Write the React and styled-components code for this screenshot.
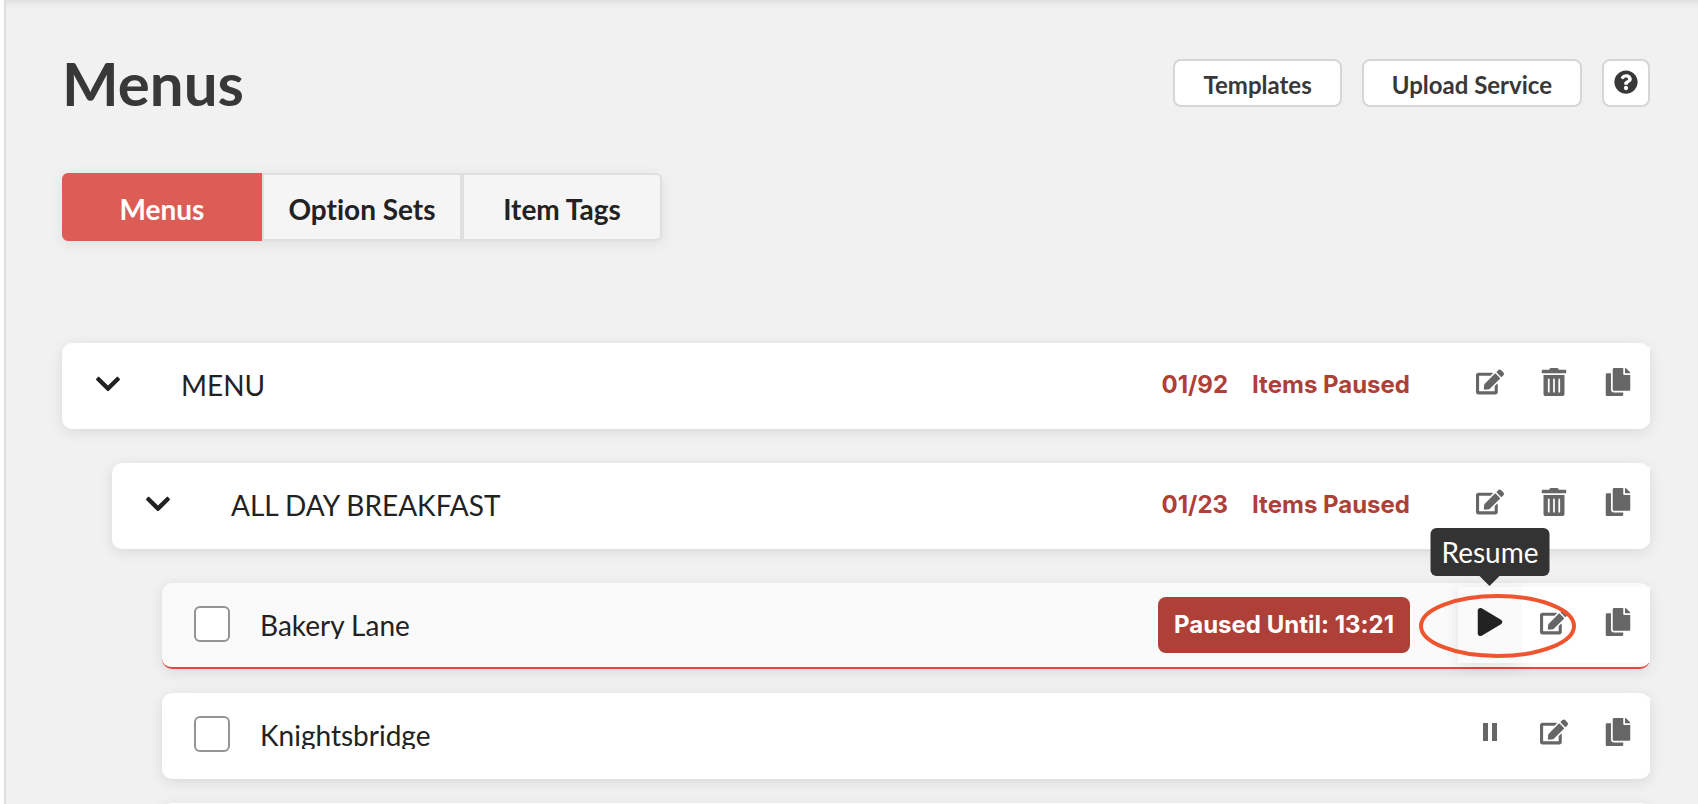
import React from "react";
import styled, { createGlobalStyle } from "styled-components";
import {
  FaChevronDown,
  FaCopy,
  FaEdit,
  FaPlay,
  FaQuestionCircle,
  FaTrashAlt,
} from "react-icons/fa";

const GlobalStyle = createGlobalStyle`
  *, *::before, *::after { box-sizing: border-box; }
  body {
    margin: 0;
    background: #fff;
    color: #222;
    font-family: Lato, "Liberation Sans", sans-serif;
    font-size: 28px;
    font-variant-ligatures: none;
  }
  button, input { font: inherit; font-variant-ligatures: none; color: inherit; margin: 0; }
  ul { list-style: none; margin: 0; padding: 0; }
`;

const Page = styled.div`
  height: 100vh;
  padding-left: 4px;
  overflow: hidden;
`;

const Main = styled.main`
  height: 100%;
  padding: 47px 48px 0 56px;
  border-left: 2px solid #dedede;
  background: linear-gradient(#dfdfdf, #ebebeb 4px, #f1f1f1 10px);
`;

const Header = styled.header`
  display: flex;
  align-items: center;
  justify-content: space-between;
`;

const Title = styled.h1`
  margin: 0;
  color: #383838;
  font-size: 60px;
  line-height: 72px;
`;

const HeaderActions = styled.div`
  display: flex;
  gap: 20px;
`;

const HeaderButton = styled.button`
  height: 48px;
  padding: 2px 28px 0;
  border: 2px solid #d6d6d6;
  border-radius: 8px;
  background: #fff;
  color: #383838;
  font-size: 24px;
  font-weight: 700;
`;

const HelpButton = styled(HeaderButton)`
  display: flex;
  align-items: center;
  justify-content: center;
  width: 48px;
  padding: 0 0 2px;
`;

const Tabs = styled.nav`
  display: flex;
  width: fit-content;
  margin-top: 54px;
  border-radius: 6px;
  box-shadow: 0 3px 14px rgba(0, 0, 0, 0.08);
`;

const Tab = styled.button`
  width: 200px;
  height: 68px;
  padding: 4px 0 0;
  border: 2px solid ${(p) => (p.$active ? "#dc5c56" : "#dfdfdf")};
  background: ${(p) => (p.$active ? "#dc5c56" : "#f5f5f5")};
  color: ${(p) => (p.$active ? "#fff" : "#222")};
  font-weight: 700;

  &:first-child { border-radius: 6px 0 0 6px; }
  &:last-child { border-radius: 0 6px 6px 0; }
`;

const MenuList = styled.ul`
  margin-top: 102px;
`;

const NestedList = styled.ul`
  display: flex;
  flex-direction: column;
  gap: ${(p) => p.$gap || "0"};
  margin-top: 34px;
  padding-left: 50px;
`;

const Card = styled.div`
  display: flex;
  align-items: center;
  height: 86px;
  border-bottom: 2px solid ${(p) => (p.$paused ? "#e8453c" : "transparent")};
  border-radius: 10px;
  background: ${(p) => (p.$paused ? "#fafafa" : "#fff")};
  box-shadow: 0 3px 14px rgba(0, 0, 0, 0.1);
`;

const Toggle = styled.button`
  display: flex;
  margin: 0 59px 0 32px;
  padding: 0 0 2px;
  border: 0;
  background: none;
`;

const GroupName = styled.span`
  line-height: 28px;
  white-space: nowrap;
`;

const ItemName = styled(GroupName)`
  overflow: hidden;
`;

const ItemLabel = styled.label`
  display: flex;
  align-items: center;
  gap: 30px;
  padding-left: 32px;
`;

const Checkbox = styled.input`
  && { margin-bottom: 2px; }
  appearance: none;
  width: 36px;
  height: 36px;
  border: 2px solid #949494;
  border-radius: 6px;
  background: #fff;
`;

const Status = styled.span`
  display: flex;
  gap: 24px;
  margin: 0 48px 0 auto;
  color: #ae4037;
  font-family: Inter, "Liberation Sans", sans-serif;
  font-size: 24px;
  font-weight: 700;
  line-height: 56px;
`;

const Badge = styled(Status)`
  padding: 0 16px;
  border-radius: 8px;
  background: #ae4037;
  color: #fff;
`;

const Actions = styled.div`
  position: relative;
  display: flex;
  flex: none;
  margin-left: ${(p) => (p.$push ? "auto" : "0")};
`;

const Action = styled.button`
  display: flex;
  align-items: center;
  justify-content: center;
  width: 64px;
  height: 76px;
  padding: 0 0 6px;
  border: 0;
  background: ${(p) => (p.$hovered ? "#fafafa" : "#fff")};
  box-shadow: ${(p) => (p.$hovered ? "0 3px 14px rgba(0, 0, 0, 0.1)" : "none")};
  color: ${(p) => (p.$hovered ? "#222" : "#666")};
`;

const Tooltip = styled.span`
  position: absolute;
  bottom: calc(100% + 11px);
  left: 32px;
  z-index: 2;
  transform: translateX(-50%);
  padding: 0 11px;
  border-radius: 6px;
  background: #333;
  color: #fff;
  line-height: 48px;

  &::after {
    content: "";
    position: absolute;
    top: 100%;
    left: 50%;
    margin-left: -10px;
    border: 10px solid transparent;
    border-top-color: #333;
    border-bottom: 0;
  }
`;

const Highlight = styled.svg`
  position: absolute;
  top: 7px;
  left: -39px;
  z-index: 1;
  pointer-events: none;
`;

const PauseIcon = () => (
  <svg width="28" height="28" viewBox="0 0 28 28" fill="currentColor" aria-hidden="true">
    <rect x="7" y="5" width="5" height="18" />
    <rect x="16" y="5" width="5" height="18" />
  </svg>
);

function GroupCard({ name, paused }) {
  return (
    <Card>
      <Toggle aria-label={`Collapse ${name}`}>
        <FaChevronDown />
      </Toggle>
      <GroupName>{name}</GroupName>
      <Status>
        <span>{paused}</span>
        <span>Items Paused</span>
      </Status>
      <Actions>
        <Action aria-label="Edit"><FaEdit /></Action>
        <Action aria-label="Delete"><FaTrashAlt /></Action>
        <Action aria-label="Duplicate"><FaCopy /></Action>
      </Actions>
    </Card>
  );
}

function ItemCard({ name, pausedUntil }) {
  return (
    <Card $paused={Boolean(pausedUntil)}>
      <ItemLabel>
        <Checkbox type="checkbox" />
        <ItemName>{name}</ItemName>
      </ItemLabel>
      {pausedUntil && <Badge>Paused Until: {pausedUntil}</Badge>}
      <Actions $push={!pausedUntil}>
        {pausedUntil ? (
          <Action $hovered aria-label="Resume"><FaPlay /></Action>
        ) : (
          <Action aria-label="Pause"><PauseIcon /></Action>
        )}
        <Action aria-label="Edit"><FaEdit /></Action>
        <Action aria-label="Duplicate"><FaCopy /></Action>
        {pausedUntil && (
          <>
            <Tooltip role="tooltip">Resume</Tooltip>
            <Highlight width="157" height="64" viewBox="0 0 157 64" aria-hidden="true">
              <path d="M138 12H152V24L150 21.4L141 14.7Z" fill="#fff" />
              <ellipse cx="78.5" cy="32" rx="76.5" ry="30" fill="none" stroke="#ee542e" strokeWidth="4" />
            </Highlight>
          </>
        )}
      </Actions>
    </Card>
  );
}

export default function App() {
  return (
    <Page>
      <GlobalStyle />
      <Main>
        <Header>
          <Title>Menus</Title>
          <HeaderActions>
            <HeaderButton>Templates</HeaderButton>
            <HeaderButton>Upload Service</HeaderButton>
            <HelpButton aria-label="Help"><FaQuestionCircle /></HelpButton>
          </HeaderActions>
        </Header>
        <Tabs>
          <Tab $active>Menus</Tab>
          <Tab>Option Sets</Tab>
          <Tab>Item Tags</Tab>
        </Tabs>
        <MenuList>
          <li>
            <GroupCard name="MENU" paused="01/92" />
            <NestedList>
              <li>
                <GroupCard name="ALL DAY BREAKFAST" paused="01/23" />
                <NestedList $gap="24px">
                  <li><ItemCard name="Bakery Lane" pausedUntil="13:21" /></li>
                  <li><ItemCard name="Knightsbridge" /></li>
                  <li aria-hidden="true"><Card /></li>
                </NestedList>
              </li>
            </NestedList>
          </li>
        </MenuList>
      </Main>
    </Page>
  );
}
